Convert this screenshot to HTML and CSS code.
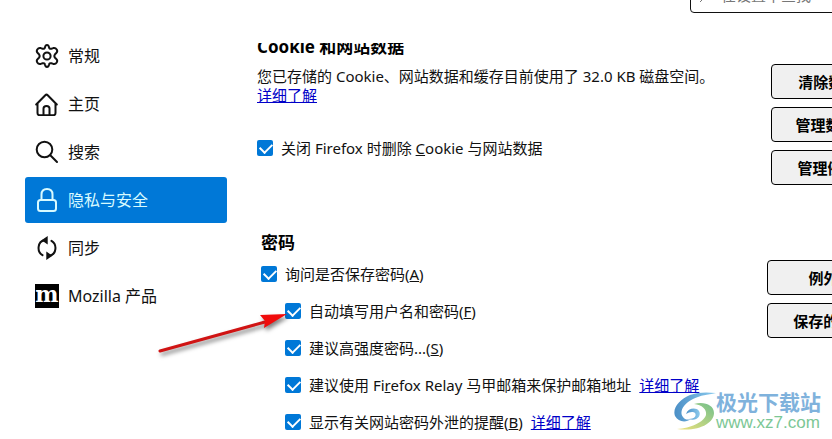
FILE: index.html
```html
<!DOCTYPE html>
<html lang="zh-CN">
<head>
    <meta charset="UTF-8">
    <meta name="viewport" content="width=device-width, initial-scale=1.0">
    <title>设置</title>
    <link rel="stylesheet" href="styles.css">
</head>
<body>

<div class="page">
    <nav class="sidebar">
        <a class="category" href="#general">
            <svg class="icon" viewBox="0 0 24 24">
                <path d="M10 3.2Q10.500 1 12 1Q13.500 1 14 3.200Q14.400 5.300 16.400 4.700L18.300 4.100Q20.500 3.600 21.700 5.500Q22.900 7.500 21.300 9L20 10.300Q18.700 12 20 13.700L21.300 15Q22.900 16.500 21.700 18.500Q20.500 20.400 18.300 19.900L16.400 19.300Q14.400 18.700 14 20.800Q13.500 23 12 23Q10.500 23 10 20.800Q9.600 18.700 7.600 19.300L5.700 19.900Q3.500 20.400 2.300 18.500Q1.100 16.500 2.700 15L4 13.700Q5.300 12 4 10.300L2.700 9Q1.100 7.500 2.300 5.500Q3.500 3.600 5.700 4.100L7.600 4.700Q9.600 5.300 10 3.200Z"/>
                <circle cx="12" cy="12" r="3.600"/>
            </svg>
            <span>常规</span>
        </a>
        <a class="category" href="#home">
            <svg class="icon" viewBox="0 0 24 24">
                <path d="M1.200 12.500L10.300 3.200Q11.500 2 12.700 3.200L21.800 12.500M2.500 11.500V21Q2.500 23.200 4.700 23.200H18.300Q20.500 23.200 20.500 21V11.500M8.500 23V16.500Q8.500 14 11.500 14Q14.500 14 14.500 16.500V23"/>
            </svg>
            <span>主页</span>
        </a>
        <a class="category" href="#search">
            <svg class="icon" viewBox="0 0 24 24">
                <circle cx="9.500" cy="9.500" r="7.800"/>
                <path d="M15.300 15.300L22 22"/>
            </svg>
            <span>搜索</span>
        </a>
        <a class="category selected" href="#privacy">
            <svg class="icon" viewBox="0 0 24 24">
                <rect x="3" y="12" width="18" height="11" rx="2.500"/>
                <path d="M6.500 12V6.500Q6.500 1 12 1Q17.500 1 17.500 6.500V12"/>
            </svg>
            <span>隐私与安全</span>
        </a>
        <a class="category" href="#sync">
            <svg class="icon" viewBox="0 0 24 24">
                <path d="M7.500 19.200C1.500 15.500 2.500 5.500 9.500 4.300M16.500 4.800C22.500 8.500 21.500 18.500 14.500 19.700"/>
                <path class="solid" d="M6.500 4.300L12.700 0V8.600ZM17.500 19.700L11.300 15.400V24Z"/>
            </svg>
            <span>同步</span>
        </a>
        <a class="category" href="#more">
            <span class="mozilla">m</span>
            <span>Mozilla 产品</span>
        </a>
    </nav>

    <main class="content">
        <header class="search-bar">
            <label class="search">
                <svg class="search-icon" viewBox="0 0 16 16">
                    <circle cx="9.500" cy="6.500" r="5"/>
                    <path d="M6 10L1 15"/>
                </svg>
                <input type="search" placeholder="在设置中查找" aria-label="在设置中查找">
            </label>
        </header>

        <div class="pane">
            <section>
                <h2>Cookie 和网站数据</h2>
                <div class="group">
                    <div class="details">
                        <p>您已存储的 Cookie、网站数据和缓存目前使用了 32.0 KB 磁盘空间。<br><a href="#storage">详细了解</a></p>
                        <div class="option">
                            <input type="checkbox" id="deleteOnClose" checked>
                            <label for="deleteOnClose">关闭 Firefox 时删除 <u>C</u>ookie 与网站数据</label>
                        </div>
                    </div>
                    <div class="buttons">
                        <button type="button">清除数据(<u>L</u>)…</button>
                        <button type="button">管理数据(<u>M</u>)…</button>
                        <button type="button">管理例外(<u>X</u>)…</button>
                    </div>
                </div>
            </section>

            <section class="passwords">
                <h2>密码</h2>
                <div class="group">
                    <div class="options">
                        <div class="option">
                            <input type="checkbox" id="savePasswords" checked>
                            <label for="savePasswords">询问是否保存密码(<u>A</u>)</label>
                        </div>
                        <div class="option indent">
                            <input type="checkbox" id="autofill" checked>
                            <label for="autofill">自动填写用户名和密码(<u>F</u>)</label>
                        </div>
                        <div class="option indent">
                            <input type="checkbox" id="strongPasswords" checked>
                            <label for="strongPasswords">建议高强度密码...(<u>S</u>)</label>
                        </div>
                        <div class="option indent">
                            <input type="checkbox" id="relay" checked>
                            <label for="relay">建议使用 Fi<u>r</u>efox Relay 马甲邮箱来保护邮箱地址</label>
                            <a href="#relay-info">详细了解</a>
                        </div>
                        <div class="option indent">
                            <input type="checkbox" id="breachAlerts" checked>
                            <label for="breachAlerts">显示有关网站密码外泄的提醒(<u>B</u>)</label>
                            <a href="#breach-info">详细了解</a>
                        </div>
                    </div>
                    <div class="buttons">
                        <button type="button">例外(<u>X</u>)…</button>
                        <button type="button">保存的密码(<u>L</u>)</button>
                    </div>
                </div>
            </section>
        </div>
    </main>
</div>

<svg class="arrow" viewBox="0 0 136 50">
    <path class="shaft" d="M5 40L110 11"/>
    <path class="head" d="M132 3L105 4L110 10L109 17Z"/>
</svg>

<div class="watermark">
    <svg class="watermark-logo" viewBox="0 0 42 42">
        <defs>
            <linearGradient id="blue" x1="0" y1="0" x2="1" y2="0">
                <stop offset="0" stop-color="#4b8fc6"/>
                <stop offset="1" stop-color="#8ccbee"/>
            </linearGradient>
            <linearGradient id="green" x1="0" y1="1" x2="1" y2="0">
                <stop offset="0" stop-color="#f0e27c"/>
                <stop offset="1" stop-color="#72c08c"/>
            </linearGradient>
        </defs>
        <path fill="url(#blue)" d="M42 2C33 4 27 4 19 8C9 13 5 21 9 26C11 29 14 29 17 28C12 32 4 31 1 25C-2 17 6 8 16 4C24 1 33 1 42 2Z"/>
        <path fill="url(#blue)" d="M12 23C14 17 22 16 25 20C28 25 22 31 15 28C20 28 23 25 21 22C19 20 15 21 12 23Z"/>
        <path fill="url(#green)" d="M20 13C30 10 40 14 40 22C40 32 25 41 3 38C17 37 30 31 32 24C33 18 28 14 20 13Z"/>
    </svg>
    <div>
        <div class="watermark-name">极光下载站</div>
        <div class="watermark-url">www.xz7.com</div>
    </div>
</div>

</body>
</html>
```

FILE: styles.css
```css
* {
    box-sizing: border-box;
    margin: 0;
    padding: 0;
}

body {
    height: 100vh;
    overflow: hidden;
    position: relative;
    background-color: #fff;
    color: #111;
    font-family: 'Noto Sans', 'Noto Sans CJK SC', sans-serif;
    font-size: 15px;
    line-height: 20px;
}

.page {
    display: flex;
    height: 100%;
}

/* Sidebar */
.sidebar {
    flex: 0 0 257px;
    display: flex;
    flex-direction: column;
    gap: 2px;
    padding: 33px 30px 0 25px;
}

.category {
    display: flex;
    align-items: center;
    gap: 9px;
    height: 46px;
    padding-left: 10px;
    border-radius: 3px;
    color: #111;
    font-size: 16px;
    text-decoration: none;
}

.category.selected {
    background-color: #0078d7;
    color: #d8faff;
}

.icon {
    width: 24px;
    height: 24px;
    fill: none;
    stroke: currentColor;
    stroke-width: 2;
    stroke-linecap: round;
    stroke-linejoin: round;
}

.icon .solid {
    fill: currentColor;
    stroke: none;
}

.mozilla {
    width: 24px;
    height: 24px;
    background-color: #000;
    color: #fff;
    font-family: 'DejaVu Serif', serif;
    font-size: 22px;
    font-weight: bold;
    line-height: 20px;
    text-align: center;
}

/* Main column */
.content {
    flex: 0 0 664px;
    display: flex;
    flex-direction: column;
}

.search-bar {
    display: flex;
    flex-shrink: 0;
    align-items: flex-end;
    justify-content: flex-end;
    height: 43px;
    padding-bottom: 30px;
}

.search {
    display: flex;
    align-items: center;
    gap: 6px;
    width: 231px;
    height: 36px;
    flex-shrink: 0;
    padding: 0 8px;
    border: 1px solid #111;
    border-radius: 4px;
}

.search-icon {
    width: 16px;
    height: 16px;
    fill: none;
    stroke: #777;
}

.search input {
    flex: 1;
    min-width: 0;
    border: none;
    outline: none;
    background: none;
    font: inherit;
}

.search input::placeholder {
    color: #777;
}

.pane {
    flex: 1;
    overflow: hidden;
}

section {
    margin-top: -8px;
}

.passwords {
    margin-top: 46px;
    padding: 0 4px;
}

h2 {
    margin-bottom: 5px;
    font-size: 17px;
    line-height: 24px;
    color: #000;
}

.group {
    display: flex;
    justify-content: space-between;
}

.details {
    padding-top: 3px;
}

.details p {
    margin-bottom: 33px;
    line-height: 19px;
}

.options {
    display: flex;
    flex-direction: column;
    gap: 17px;
    padding-top: 4px;
}

.option {
    display: flex;
    align-items: center;
    gap: 8px;
    white-space: nowrap;
}

.indent {
    padding-left: 24px;
}

a {
    color: #0000c8;
}

input[type="checkbox"] {
    appearance: none;
    width: 16px;
    height: 16px;
    border-radius: 2px;
    background-color: #0078d7;
}

input[type="checkbox"]:checked::before {
    content: "";
    display: block;
    width: 10px;
    height: 6px;
    margin: 3px;
    border-left: 2px solid #fff;
    border-bottom: 2px solid #fff;
    transform: rotate(-45deg);
}

.buttons {
    display: flex;
    flex-direction: column;
    gap: 8px;
    width: 150px;
    flex-shrink: 0;
}

button {
    height: 35px;
    padding-right: 4px;
    border: 1px solid #000;
    border-radius: 4px;
    background-color: #f0f0f0;
    color: #000;
    font: inherit;
    font-weight: bold;
}

/* Overlays */
.arrow {
    position: absolute;
    left: 155px;
    top: 311px;
    width: 136px;
    height: 50px;
    filter: drop-shadow(2px 3px 2px rgba(0, 0, 0, 0.5));
}

.shaft {
    stroke: #d01414;
    stroke-width: 3;
    stroke-linecap: round;
}

.head {
    fill: #f00c0c;
}

.watermark {
    position: absolute;
    right: 11px;
    bottom: 6px;
    display: flex;
    align-items: center;
}

.watermark-logo {
    width: 42px;
    height: 42px;
}

.watermark-name {
    color: #7fb2dc;
    font-size: 21px;
    font-weight: bold;
    line-height: 22px;
}

.watermark-url {
    color: #7cc795;
    font-family: 'Liberation Sans', sans-serif;
    font-size: 17px;
    line-height: 20px;
}
```
